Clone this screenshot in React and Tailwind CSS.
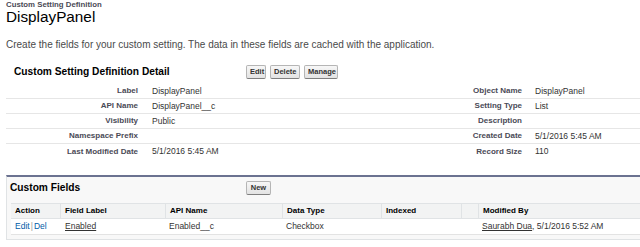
const details = [
  ["Label", "DisplayPanel", "Object Name", "DisplayPanel"],
  ["API Name", "DisplayPanel__c", "Setting Type", "List"],
  ["Visibility", "Public", "Description", ""],
  ["Namespace Prefix", "", "Created Date", "5/1/2016 5:45 AM"],
  ["Last Modified Date", "5/1/2016 5:45 AM", "Record Size", "110"],
];

function Btn({ children, className = "" }) {
  return (
    <button
      className={`h-[14px] px-[3px] rounded-[2px] border border-[#b5b5b5] border-b-[#7f7f7f] bg-gradient-to-b from-[#f7f7f7] to-[#e3e3e3] text-[7.5px] leading-[12px] font-bold text-[#333] ${className}`}
    >
      {children}
    </button>
  );
}

function App() {
  return (
    <div className="w-[640px] h-[247px] overflow-hidden bg-white font-['Liberation_Sans',Arial,sans-serif] text-[#333]">
      {/* page header */}
      <div className="pl-[6px] pt-[1px]">
        <div className="text-[7.8px] leading-[8px] font-bold text-[#4a4a56]">Custom Setting Definition</div>
        <div className="text-[15.3px] leading-[15px] text-black">DisplayPanel</div>
      </div>
      <div className="pl-[6px] mt-[15px] text-[10px] leading-[11px] text-[#4a4a4a]">
        Create the fields for your custom setting. The data in these fields are cached with the application.
      </div>

      {/* detail block */}
      <div className="ml-[6px] mt-[13px]">
        <div className="flex items-center h-[18px] pl-[8px]">
          <div className="w-[232px] text-[10.2px] font-bold text-black">Custom Setting Definition Detail</div>
          <div className="flex gap-[4px]">
            <Btn className="w-[20px]">Edit</Btn>
            <Btn className="w-[30px]">Delete</Btn>
            <Btn className="w-[34px]">Manage</Btn>
          </div>
        </div>
        <div className="mt-[3px]">
          {details.map((r, i) => (
            <div
              key={r[0]}
              className={`grid grid-cols-[140px_200px_184px_110px] h-[15px] items-center ${i < details.length - 1 ? "border-b border-[#e6e6e6]" : ""}`}
            >
              <div className="text-right pr-[8px] text-[8px] font-bold text-[#4a4a56]">{r[0]}</div>
              <div className="pl-[6px] text-[8.5px]">{r[1]}</div>
              <div className="text-right pr-[8px] text-[8px] font-bold text-[#4a4a56]">{r[2]}</div>
              <div className="pl-[5px] text-[8.5px]">{r[3]}</div>
            </div>
          ))}
        </div>
      </div>

      {/* related list */}
      <div className="ml-[6px] mt-[16px] w-[636px] border-t-[2px] border-t-[#6b7290] border-x border-b border-x-[#e0e3e5] border-b-[#e0e3e5] bg-[#f8f8f8] pb-[4px]">
        <div className="flex items-center h-[14px] mt-[4px] mb-[8px] pl-[3px]">
          <div className="w-[236px] text-[10.2px] font-bold text-black">Custom Fields</div>
          <Btn className="w-[25px] h-[13px] leading-[11px]">New</Btn>
        </div>
        <div className="ml-[4px]">
          <div className="grid grid-cols-[49px_105px_117px_99px_80px_17px_1fr] h-[16px] bg-[#f2f3f3] border-y border-[#e0e3e5] text-[8px] font-bold text-black">
            <div className="pl-[4px] flex items-center">Action</div>
            <div className="pl-[4px] flex items-center border-l border-[#e0e3e5]">Field Label</div>
            <div className="pl-[4px] flex items-center border-l border-[#e0e3e5]">API Name</div>
            <div className="pl-[4px] flex items-center border-l border-[#e0e3e5]">Data Type</div>
            <div className="pl-[4px] flex items-center border-l border-[#e0e3e5]">Indexed</div>
            <div className="border-l border-[#e0e3e5]"></div>
            <div className="pl-[4px] flex items-center border-l border-[#e0e3e5]">Modified By</div>
          </div>
          <div className="grid grid-cols-[49px_105px_117px_99px_80px_17px_1fr] h-[16px] bg-white border-b border-[#e3e3e3] text-[8.5px] items-center">
            <div className="pl-[4px]">
              <span className="text-[#015ba7]">Edit</span>
              <span className="text-[#999] px-[1px]">|</span>
              <span className="text-[#015ba7]">Del</span>
            </div>
            <div className="pl-[5px]"><span className="underline text-[#333]">Enabled</span></div>
            <div className="pl-[4px]">Enabled__c</div>
            <div className="pl-[4px]">Checkbox</div>
            <div></div>
            <div></div>
            <div className="pl-[4px]">
              <span className="underline">Saurabh Dua</span>, 5/1/2016 5:52 AM
            </div>
          </div>
        </div>
      </div>
    </div>
  );
}

export default App;
